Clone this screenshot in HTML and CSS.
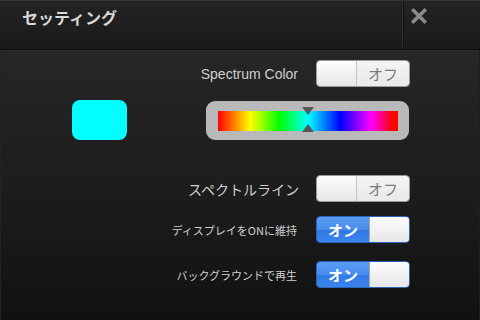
FILE: index.html
```html
<!DOCTYPE html>
<html lang="ja">
<head>
  <meta charset="UTF-8">
  <title>セッティング</title>
  <link rel="stylesheet" href="styles.css">
</head>
<body>
  <div class="screen">
    <div class="header">
      <span class="title">セッティング</span>
      <div class="close">
        <svg width="18" height="18" viewBox="0 0 18 18">
          <path d="M3.5 3.5 L14.5 14.5 M14.5 3.5 L3.5 14.5" stroke="#8a8a8a" stroke-width="3.6" stroke-linecap="square" />
        </svg>
      </div>
    </div>

    <div class="content">
      <div class="row row-first">
        <span class="label label-latin">Spectrum Color</span>
        <div class="toggle off">
          <span class="knob"></span>
          <span class="state">オフ</span>
        </div>
      </div>

      <div class="spectrum-row">
        <div class="swatch"></div>
        <div class="slider">
          <div class="bar"></div>
          <span class="marker marker-top"></span>
          <span class="marker marker-bottom"></span>
        </div>
      </div>

      <div class="row row-line">
        <span class="label">スペクトルライン</span>
        <div class="toggle off">
          <span class="knob"></span>
          <span class="state">オフ</span>
        </div>
      </div>

      <div class="row row-display">
        <span class="label label-small">ディスプレイをONに維持</span>
        <div class="toggle on">
          <span class="state">オン</span>
          <span class="knob"></span>
        </div>
      </div>

      <div class="row row-bg">
        <span class="label label-small">バックグラウンドで再生</span>
        <div class="toggle on">
          <span class="state">オン</span>
          <span class="knob"></span>
        </div>
      </div>
    </div>
  </div>
</body>
</html>
```

FILE: styles.css
```css
html, body {
  margin: 0;
  padding: 0;
  background: #141414;
}
.screen {
  width: 480px;
  height: 320px;
  display: flex;
  flex-direction: column;
  font-family: "Noto Sans CJK JP", "Liberation Sans", sans-serif;
  overflow: hidden;
}

/* 헤더 */
.header {
  height: 48px;
  display: flex;
  align-items: flex-start;
  background: linear-gradient(#232323, #1a1a1a);
  border-top: 1px solid #363636;
  border-bottom: 1px solid #101010;
}
.title {
  flex: 1;
  padding: 4px 0 0 22px;
  color: #d8d8d8;
  font-size: 16px;
  font-weight: bold;
}
.close {
  width: 78px;
  height: 47px;
  padding: 6px 0 0 7px;
  box-sizing: border-box;
  border-left: 1px solid #2e2e2e;
  box-shadow: inset 1px 0 0 #141414;
}
.close svg {
  display: block;
}

/* 본문 */
.content {
  flex: 1;
  display: flex;
  flex-direction: column;
  padding: 0 69px 0 71px;
  background: linear-gradient(#2a2a2a 0px, #262626 4px, #1c1c1c 150px, #111 270px);
  border-left: 1px solid #232323;
  border-right: 1px solid #1e1e1e;
}
.row {
  display: flex;
  justify-content: flex-end;
  align-items: center;
  gap: 17px;
}
.row-first { margin-top: 10px; }
.row-line { margin-top: 35px; }
.row-display { margin-top: 14px; }
.row-bg { margin-top: 18px; }

.label {
  color: #cfcfcf;
  font-size: 14px;
}
.label-latin {
  font-family: "Liberation Sans", sans-serif;
  font-size: 14px;
  margin-right: 1px;
}
.label-small {
  font-size: 11px;
  margin-right: 2px;
}

/* 토글 */
.toggle {
  width: 94px;
  height: 27px;
  display: flex;
  border-radius: 4px;
  overflow: hidden;
  box-sizing: border-box;
  border: 1px solid #9a9a9a;
}
.knob {
  width: 39px;
  background: linear-gradient(#fdfdfd, #e6e6e6);
}
.state {
  flex: 1;
  display: flex;
  align-items: center;
  justify-content: center;
  font-size: 15px;
  line-height: 1;
}
.off .knob {
  border-right: 1px solid #c4c4c4;
}
.off .state {
  background: linear-gradient(#f4f4f4, #e9e9e9);
  color: #7a7a7a;
}
.on {
  border-color: #2c62b8;
}
.on .state {
  background: linear-gradient(#5a9cf4 0%, #4a8cec 50%, #3478e2 52%, #3a84ee 100%);
  color: #fff;
  font-weight: bold;
}
.on .knob {
  border-left: 1px solid #a8a8a8;
}

/* 스펙트럼 */
.spectrum-row {
  margin-top: 13px;
  display: flex;
  justify-content: space-between;
  align-items: center;
}
.swatch {
  width: 55px;
  height: 40px;
  border-radius: 8px;
  background: #00ffff;
}
.slider {
  position: relative;
  width: 180px;
  height: 20px;
  padding: 10px 11px 9px 12px;
  border-radius: 9px;
  background: #b9b9b9;
  margin-right: 1px;
}
.bar {
  height: 100%;
  background: linear-gradient(to right, #ff0000 0%, #ff8000 9%, #ffff00 18%, #00ff00 34%, #00ffff 50%, #0000ff 68%, #ff00ff 85%, #ff0000 97%);
}
.marker {
  position: absolute;
  left: 96px;
  width: 0;
  height: 0;
  border-left: 6px solid transparent;
  border-right: 6px solid transparent;
}
.marker-top {
  top: 6px;
  border-top: 8px solid #585858;
}
.marker-bottom {
  bottom: 8px;
  border-bottom: 8px solid #585858;
}
```
